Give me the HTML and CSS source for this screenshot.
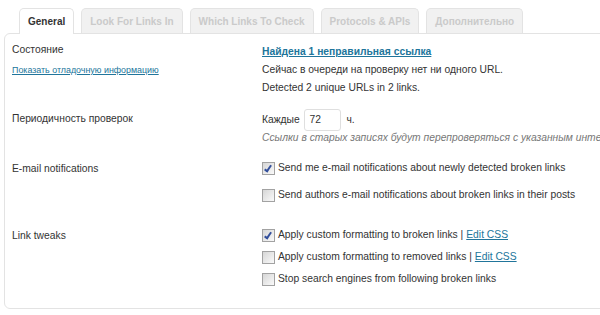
FILE: index.html
```html
<!DOCTYPE html>
<html lang="ru">
<head>
  <meta charset="UTF-8">
  <title>Broken Link Checker</title>
  <link rel="stylesheet" href="styles.css">
</head>
<body>
  <div class="tabs">
    <a class="tab active">General</a>
    <a class="tab">Look For Links In</a>
    <a class="tab">Which Links To Check</a>
    <a class="tab">Protocols &amp; APIs</a>
    <a class="tab">Дополнительно</a>
  </div>

  <div class="panel">
    <!-- статус -->
    <div class="row row-status">
      <div class="label">
        Состояние
        <a class="debug-link" href="#">Показать отладочную информацию</a>
      </div>
      <div class="field">
        <a class="status-link" href="#">Найдена 1 неправильная ссылка</a>
        <div>Сейчас в очереди на проверку нет ни одного URL.</div>
        <div>Detected 2 unique URLs in 2 links.</div>
      </div>
    </div>

    <div class="row row-period">
      <div class="label">Периодичность проверок</div>
      <div class="field">
        <div class="period">Каждые <span class="input">72</span> ч.</div>
        <div class="hint">Ссылки в старых записях будут перепроверяться с указанным интервалом.</div>
      </div>
    </div>

    <div class="row row-email">
      <div class="label">E-mail notifications</div>
      <div class="field">
        <label class="check"><span class="cb checked"></span>Send me e-mail notifications about newly detected broken links</label>
        <label class="check"><span class="cb"></span>Send authors e-mail notifications about broken links in their posts</label>
      </div>
    </div>

    <div class="row row-tweaks">
      <div class="label">Link tweaks</div>
      <div class="field">
        <label class="check"><span class="cb checked"></span>Apply custom formatting to broken links | <a href="#">Edit CSS</a></label>
        <label class="check"><span class="cb"></span>Apply custom formatting to removed links | <a href="#">Edit CSS</a></label>
        <label class="check"><span class="cb"></span>Stop search engines from following broken links</label>
      </div>
    </div>
  </div>
</body>
</html>
```

FILE: styles.css
```css
body {
  margin: 0;
  padding: 8px 0 0 4px;
  background: #fff;
  color: #333;
  font-family: "Liberation Sans", Arial, sans-serif;
  font-size: 10.3px;
  overflow: hidden;
}
a {
  color: #21759b;
}
.tabs {
  display: flex;
  gap: 7px;
  padding-left: 15px;
  height: 25px;
  position: relative;
  z-index: 1;
}
.tab {
  display: block;
  flex-shrink: 0;
  white-space: nowrap;
  height: 24px;
  line-height: 25px;
  padding: 0 8px;
  border: 1px solid #e3e3e3;
  border-bottom: none;
  border-radius: 5px 5px 0 0;
  background: #f1f1f1;
  color: #cacaca;
  font-weight: bold;
  font-size: 10px;
  text-decoration: none;
}
.tab.active {
  background: #fff;
  color: #333;
  height: 25px;
}
.panel {
  width: 640px;
  border: 1px solid #e3e3e3;
  border-radius: 6px;
  padding: 3px 0 14px 0;
}
.row {
  display: grid;
  grid-template-columns: 257px 1fr;
  padding: 6px 0;
}
.label {
  padding-left: 7px;
  line-height: 14px;
}
.field {
  line-height: 18px;
  white-space: nowrap;
}
.debug-link {
  display: block;
  font-size: 8.9px;
  line-height: 14px;
  margin-top: 6px;
}
.status-link {
  font-weight: bold;
  display: block;
}
.row-period .label {
  padding-top: 3px;
}
.period {
  height: 22px;
  line-height: 22px;
}
.input {
  display: inline-block;
  width: 30px;
  height: 20px;
  line-height: 20px;
  padding-left: 5px;
  margin: 0 3px 0 1px;
  border: 1px solid #dfdfdf;
  border-radius: 3px;
  vertical-align: top;
}
.hint {
  color: #777;
  font-style: italic;
  line-height: 14px;
}
.row-email {
  padding-top: 8px;
  padding-bottom: 16px;
}
.row-email .label {
  padding-top: 3px;
}
.row-email .check + .check {
  margin-top: 9px;
}
.row-tweaks .label {
  padding-top: 3px;
}
.row-tweaks .check + .check {
  margin-top: 4px;
}
.check {
  display: flex;
  align-items: center;
  height: 18px;
}
.check a {
  margin-left: 3px;
}
.cb {
  display: inline-block;
  width: 11px;
  height: 11px;
  margin-right: 3px;
  border: 1px solid #a2a2a2;
  background: linear-gradient(135deg, #d6d6d6, #fafafa);
  position: relative;
}
.cb.checked::after {
  content: "";
  position: absolute;
  left: 3px;
  top: 1px;
  width: 2px;
  height: 6px;
  border: solid #34509c;
  border-width: 0 2px 2px 0;
  transform: rotate(35deg);
}
```
